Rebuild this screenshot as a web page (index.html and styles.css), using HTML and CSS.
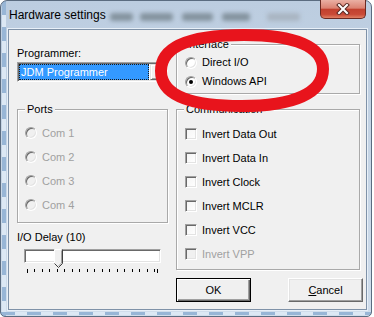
FILE: index.html
```html
<!DOCTYPE html>
<html>
<head>
<meta charset="utf-8">
<title>Hardware settings</title>
<link rel="stylesheet" href="styles.css">
</head>
<body>
<div class="window">
  <div class="titlebar">
    <span class="title">Hardware settings</span>
    <div class="glass">
      <span class="blob b1"></span><span class="blob b2"></span><span class="blob b3"></span><span class="blob b4"></span><span class="blob b5"></span>
    </div>
    <div class="close">
      <svg width="14" height="12" viewBox="0 0 14 12"><path d="M3 2 L11 10 M11 2 L3 10" stroke="#5a2a24" stroke-width="4" stroke-linecap="square" fill="none"/><path d="M3 2 L11 10 M11 2 L3 10" stroke="#fff" stroke-width="2" stroke-linecap="square" fill="none"/></svg>
    </div>
  </div>
  <div class="client">
    <div class="col col-left">
      <div class="label">Programmer:</div>
      <div class="combo">
        <div class="combo-field"><span class="combo-sel">JDM Programmer</span></div>
        <div class="combo-btn"><svg width="7" height="4" viewBox="0 0 7 4"><path d="M0 0 H7 L3.5 4 Z" fill="#000"/></svg></div>
      </div>
      <div class="group ports">
        <span class="legend">Ports</span>
        <div class="row disabled"><span class="radio"></span><span>Com 1</span></div>
        <div class="row disabled"><span class="radio"></span><span>Com 2</span></div>
        <div class="row disabled"><span class="radio"></span><span>Com 3</span></div>
        <div class="row disabled"><span class="radio"></span><span>Com 4</span></div>
      </div>
      <div class="label delay">I/O Delay (10)</div>
      <div class="slider">
        <div class="track"></div>
        <svg class="thumb" width="9" height="19" viewBox="0 0 9 19">
          <path d="M0.5 18 V0.5 H8.5 V14.5 L4.5 18.5" fill="#f0f0f0"/>
          <path d="M0.5 14.5 V0.5 H7.5" stroke="#fff" fill="none"/>
          <path d="M8.5 0.5 V14.5 L4.5 18.5 L0.5 14.5" stroke="#404040" fill="none"/>
          <path d="M7.5 1.5 V14 L4.5 17" stroke="#a0a0a0" fill="none"/>
        </svg>
      </div>
      <svg class="ticks" width="137" height="5" viewBox="0 0 137 5">
        <g fill="#000">
          <rect x="3" y="0" width="1" height="4"/>
          <rect x="10" y="0" width="1" height="3"/>
          <rect x="18" y="0" width="1" height="3"/>
          <rect x="25" y="0" width="1" height="3"/>
          <rect x="33" y="0" width="1" height="3"/>
          <rect x="40" y="0" width="1" height="3"/>
          <rect x="48" y="0" width="1" height="3"/>
          <rect x="55" y="0" width="1" height="3"/>
          <rect x="63" y="0" width="1" height="3"/>
          <rect x="70" y="0" width="1" height="3"/>
          <rect x="78" y="0" width="1" height="3"/>
          <rect x="85" y="0" width="1" height="3"/>
          <rect x="93" y="0" width="1" height="3"/>
          <rect x="100" y="0" width="1" height="3"/>
          <rect x="108" y="0" width="1" height="3"/>
          <rect x="115" y="0" width="1" height="3"/>
          <rect x="123" y="0" width="1" height="3"/>
          <rect x="130" y="0" width="1" height="3"/>
          <rect x="133" y="0" width="1" height="4"/>
        </g>
      </svg>
    </div>
    <div class="col col-right">
      <div class="group iface">
        <span class="legend">Interface</span>
        <div class="row"><span class="radio"></span><span>Direct I/O</span></div>
        <div class="row"><span class="radio checked"></span><span>Windows API</span></div>
      </div>
      <div class="group comm">
        <span class="legend">Communication</span>
        <div class="row"><span class="check"></span><span>Invert Data Out</span></div>
        <div class="row"><span class="check"></span><span>Invert Data In</span></div>
        <div class="row"><span class="check"></span><span>Invert Clock</span></div>
        <div class="row"><span class="check"></span><span>Invert MCLR</span></div>
        <div class="row"><span class="check"></span><span>Invert VCC</span></div>
        <div class="row disabled"><span class="check"></span><span>Invert VPP</span></div>
      </div>
      <div class="buttons">
        <div class="btn default">OK</div>
        <div class="btn"><span class="ul">C</span>ancel</div>
      </div>
    </div>
  </div>
  <svg class="annotation" width="372" height="317" viewBox="0 0 372 317">
    <path d="M161 71 C161 46 190 35 244 35 C296 35 323 47 323 69 C323 93 294 106 242 106 C190 106 161 95 161 71 Z" fill="none" stroke="#e8141c" stroke-width="12"/>
  </svg>
</div>
</body>
</html>
```

FILE: styles.css
```css
* { box-sizing: border-box; }
html, body { margin: 0; padding: 0; }
body {
  background: #fff;
  font-family: "Liberation Sans", Arial, sans-serif;
  font-size: 11px;
  line-height: 13px;
  color: #000;
  width: 374px;
  height: 317px;
  overflow: hidden;
}
.window {
  position: relative;
  width: 372px;
  height: 317px;
  border: 1px solid #5b6c80;
  border-radius: 7px 7px 5px 5px;
  padding: 0 4px 6px 7px;
  display: flex;
  flex-direction: column;
  background:
    repeating-linear-gradient(90deg, #98b6d6 0 14px, #dce8f4 14px 26px) left 0 bottom 1px / 100% 3px no-repeat,
    repeating-linear-gradient(180deg, #98b6d6 0 14px, #dce8f4 14px 26px) left 1px top 0 / 4px 100% no-repeat,
    linear-gradient(#bccde0, #d0ddeb);
}
.titlebar {
  height: 28px;
  flex: none;
  display: flex;
  align-items: flex-start;
  margin: 0 -4px 0 -7px;
  padding: 0 5px 0 8px;
}
.title {
  margin-top: 7px;
  font-size: 12px;
  line-height: 14px;
  white-space: nowrap;
}
.glass { display: flex; margin-top: 12px; margin-left: 4px; }
.blob { height: 8px; background: #84939f; border-radius: 3px; filter: blur(2px); }
.b1 { width: 23px; }
.b2 { width: 33px; margin-left: 7px; }
.b3 { width: 31px; margin-left: 9px; }
.b4 { width: 28px; margin-left: 9px; }
.b5 { width: 33px; margin-left: 17px; background: #a9b5c2; }
.close {
  margin-left: auto;
  margin-top: -1px;
  width: 46px;
  height: 19px;
  border: 1px solid #6b2a22;
  border-top: none;
  border-radius: 0 0 5px 5px;
  background: linear-gradient(#eab0a4, #db8272 45%, #c2412f 52%, #c94a36 80%, #e08064);
  display: flex;
  align-items: center;
  justify-content: center;
}
.client {
  flex: 1;
  display: flex;
  gap: 8px;
  padding-left: 8px;
  background: #f0f0f0;
  border: 1px solid #7f92a8;
  box-shadow: 0 0 0 1px #e8f0f8;
}
.col { display: flex; flex-direction: column; }
.col-left { width: 151px; padding-top: 17px; }
.col-right { width: 184px; padding-top: 14px; }
.label { height: 13px; white-space: nowrap; }
.combo {
  margin-top: 2px;
  height: 20px;
  display: flex;
  gap: 1px;
  padding: 1px;
  background: #fff;
  border: 1px solid;
  border-color: #a0a0a0 #fff #fff #a0a0a0;
  box-shadow: inset 1px 1px 0 #696969, inset -1px -1px 0 #e3e3e3;
}
.combo-field { flex: 1; }
.combo-sel {
  display: block;
  height: 16px;
  background: #3399ff;
  color: #fff;
  border: 1px dotted #1a1a1a;
  padding-left: 1px;
  line-height: 14px;
}
.combo-btn {
  width: 16px;
  height: 16px;
  background: #f0f0f0;
  border: 1px solid;
  border-color: #e3e3e3 #696969 #696969 #e3e3e3;
  box-shadow: inset 1px 1px 0 #fff, inset -1px -1px 0 #a0a0a0;
  display: flex;
  align-items: center;
  justify-content: center;
}
.group {
  position: relative;
  border: 1px solid #a9a9a9;
  box-shadow: inset 1px 1px 0 #fff, 1px 1px 0 #fff;
}
.legend {
  position: absolute;
  top: -7px;
  left: 7px;
  padding: 0 2px;
  background: #f0f0f0;
  white-space: nowrap;
}
.row { display: flex; align-items: center; gap: 5px; height: 24px; white-space: nowrap; }
.ports { margin-top: 27px; height: 114px; padding: 11px 0 0 7px; }
.iface { height: 50px; padding: 8px 0 0 8px; }
.iface .row { height: 19px; }
.comm { margin-top: 15px; height: 161px; padding: 12px 0 0 8px; }
.disabled { color: #a0a0a0; }
.radio {
  position: relative;
  flex: none;
  width: 12px;
  height: 12px;
  border-radius: 50%;
  border: 1px solid;
  border-color: #a0a0a0 #fff #fff #a0a0a0;
  box-shadow: inset 1px 1px 0 #696969, inset -1px -1px 0 #e3e3e3;
  background: #fff;
}
.disabled .radio { background: #f0f0f0; }
.radio.checked::after {
  content: "";
  position: absolute;
  left: 3px;
  top: 3px;
  width: 4px;
  height: 4px;
  border-radius: 50%;
  background: #000;
}
.check {
  flex: none;
  width: 12px;
  height: 12px;
  border: 1px solid;
  border-color: #a0a0a0 #fff #fff #a0a0a0;
  box-shadow: inset 1px 1px 0 #696969, inset -1px -1px 0 #e3e3e3;
  background: linear-gradient(135deg, #f4f4f4, #fff);
}
.disabled .check { background: #f0f0f0; }
.delay { margin-top: 8px; }
.slider { position: relative; margin: 5px 0 0 7px; width: 137px; height: 18px; }
.track {
  width: 137px;
  height: 14px;
  background: #fff;
  border: 1px solid;
  border-color: #a0a0a0 #fff #fff #a0a0a0;
  box-shadow: inset 1px 1px 0 #696969, inset -1px -1px 0 #e3e3e3;
}
.thumb { position: absolute; left: 30px; top: 0; }
.ticks { display: block; margin: 2px 0 0 7px; }
.buttons { margin-top: 8px; margin-right: -3px; display: flex; justify-content: space-between; }
.btn {
  width: 75px;
  height: 24px;
  display: flex;
  align-items: center;
  justify-content: center;
  background: #f0f0f0;
  border: 1px solid;
  border-color: #fff #696969 #696969 #fff;
  box-shadow: inset -1px -1px 0 #a0a0a0, inset 1px 1px 0 #e3e3e3;
}
.btn.default {
  border: 1px solid #000;
  box-shadow: inset 1px 1px 0 #fff, inset -1px -1px 0 #696969, inset -2px -2px 0 #a0a0a0;
}
.ul { text-decoration: underline; }
.annotation { position: absolute; left: -1px; top: -1px; pointer-events: none; }
```
